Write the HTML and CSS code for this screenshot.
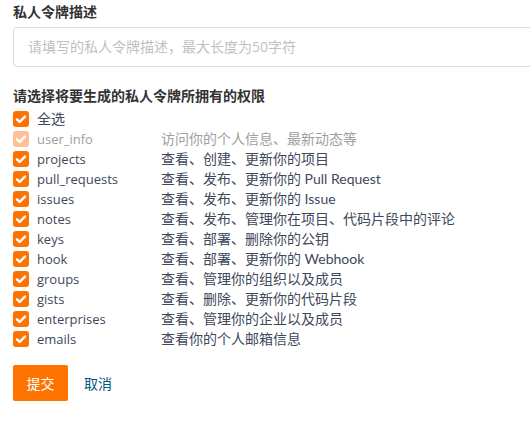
FILE: index.html
```html
<!DOCTYPE html>
<html lang="zh-CN">
<head>
<meta charset="utf-8">
<link rel="stylesheet" href="styles.css">
</head>
<body>
<div class="page">
  <div class="field-title">私人令牌描述</div>
  <div class="input">请填写的私人令牌描述，最大长度为50字符</div>
  <div class="field-title second">请选择将要生成的私人令牌所拥有的权限</div>
  <ul class="perms">
    <li class="row"><span class="cb"><svg viewBox="0 0 16 16"><path d="M4 8.3l2.7 2.6L12 5.6" fill="none" stroke="#fff" stroke-width="2.4" stroke-linecap="round" stroke-linejoin="round"/></svg></span><span class="name cjk">全选</span></li>
    <li class="row disabled"><span class="cb"><svg viewBox="0 0 16 16"><path d="M4 8.3l2.7 2.6L12 5.6" fill="none" stroke="#fff" stroke-width="2.4" stroke-linecap="round" stroke-linejoin="round"/></svg></span><span class="name">user_info</span><span class="desc">访问你的个人信息、最新动态等</span></li>
    <li class="row"><span class="cb"><svg viewBox="0 0 16 16"><path d="M4 8.3l2.7 2.6L12 5.6" fill="none" stroke="#fff" stroke-width="2.4" stroke-linecap="round" stroke-linejoin="round"/></svg></span><span class="name">projects</span><span class="desc">查看、创建、更新你的项目</span></li>
    <li class="row"><span class="cb"><svg viewBox="0 0 16 16"><path d="M4 8.3l2.7 2.6L12 5.6" fill="none" stroke="#fff" stroke-width="2.4" stroke-linecap="round" stroke-linejoin="round"/></svg></span><span class="name">pull_requests</span><span class="desc">查看、发布、更新你的 Pull Request</span></li>
    <li class="row"><span class="cb"><svg viewBox="0 0 16 16"><path d="M4 8.3l2.7 2.6L12 5.6" fill="none" stroke="#fff" stroke-width="2.4" stroke-linecap="round" stroke-linejoin="round"/></svg></span><span class="name">issues</span><span class="desc">查看、发布、更新你的 Issue</span></li>
    <li class="row"><span class="cb"><svg viewBox="0 0 16 16"><path d="M4 8.3l2.7 2.6L12 5.6" fill="none" stroke="#fff" stroke-width="2.4" stroke-linecap="round" stroke-linejoin="round"/></svg></span><span class="name">notes</span><span class="desc">查看、发布、管理你在项目、代码片段中的评论</span></li>
    <li class="row"><span class="cb"><svg viewBox="0 0 16 16"><path d="M4 8.3l2.7 2.6L12 5.6" fill="none" stroke="#fff" stroke-width="2.4" stroke-linecap="round" stroke-linejoin="round"/></svg></span><span class="name">keys</span><span class="desc">查看、部署、删除你的公钥</span></li>
    <li class="row"><span class="cb"><svg viewBox="0 0 16 16"><path d="M4 8.3l2.7 2.6L12 5.6" fill="none" stroke="#fff" stroke-width="2.4" stroke-linecap="round" stroke-linejoin="round"/></svg></span><span class="name">hook</span><span class="desc">查看、部署、更新你的 Webhook</span></li>
    <li class="row"><span class="cb"><svg viewBox="0 0 16 16"><path d="M4 8.3l2.7 2.6L12 5.6" fill="none" stroke="#fff" stroke-width="2.4" stroke-linecap="round" stroke-linejoin="round"/></svg></span><span class="name">groups</span><span class="desc">查看、管理你的组织以及成员</span></li>
    <li class="row"><span class="cb"><svg viewBox="0 0 16 16"><path d="M4 8.3l2.7 2.6L12 5.6" fill="none" stroke="#fff" stroke-width="2.4" stroke-linecap="round" stroke-linejoin="round"/></svg></span><span class="name">gists</span><span class="desc">查看、删除、更新你的代码片段</span></li>
    <li class="row"><span class="cb"><svg viewBox="0 0 16 16"><path d="M4 8.3l2.7 2.6L12 5.6" fill="none" stroke="#fff" stroke-width="2.4" stroke-linecap="round" stroke-linejoin="round"/></svg></span><span class="name">enterprises</span><span class="desc">查看、管理你的企业以及成员</span></li>
    <li class="row"><span class="cb"><svg viewBox="0 0 16 16"><path d="M4 8.3l2.7 2.6L12 5.6" fill="none" stroke="#fff" stroke-width="2.4" stroke-linecap="round" stroke-linejoin="round"/></svg></span><span class="name">emails</span><span class="desc">查看你的个人邮箱信息</span></li>
  </ul>
  <div class="actions">
    <button class="btn-submit">提交</button>
    <a class="cancel">取消</a>
  </div>
</div>
</body>
</html>
```
FILE: styles.css
```css
html, body {
  margin: 0;
  padding: 0;
  background: #fff;
}
.page {
  padding: 3px 0 0 13px;
  font-family: "Open Sans", "Noto Sans CJK SC", sans-serif;
  font-size: 14px;
  color: #40485b;
}
.field-title {
  font-weight: bold;
  line-height: 18px;
  height: 18px;
  color: #333;
}
.field-title.second {
  margin-top: 20px;
}
.input {
  margin-top: 6px;
  height: 38px;
  border: 1px solid #dedede;
  border-right: none;
  border-radius: 4px 0 0 4px;
  padding-left: 14px;
  line-height: 38px;
  color: #bfbfbf;
}
.perms {
  list-style: none;
  margin: 4px 0 0 0;
  padding: 0;
}
.row {
  display: flex;
  align-items: center;
  height: 20px;
  line-height: 20px;
}
.cb {
  width: 16px;
  height: 16px;
  border-radius: 3px;
  background: #fe7300;
  display: flex;
  flex-shrink: 0;
}
.cb svg {
  width: 16px;
  height: 16px;
}
.name {
  width: 124px;
  margin-left: 8px;
  flex-shrink: 0;
  font-size: 13px;
}
.name.cjk {
  font-size: 14px;
}
.desc {
  white-space: nowrap;
  font-family: "Lato", "Noto Sans CJK SC", sans-serif;
}
.row.disabled .cb {
  background: #fec099;
}
.row.disabled {
  color: #a0a0a0;
}
.actions {
  display: flex;
  align-items: center;
  margin-top: 16px;
}
.btn-submit {
  width: 55px;
  height: 36px;
  border: none;
  border-radius: 2px;
  background: #fe7300;
  color: #fff;
  font-family: "Open Sans", "Noto Sans CJK SC", sans-serif;
  font-size: 14px;
  padding: 0;
}
.cancel {
  margin-left: 16px;
  color: #005980;
  font-size: 14px;
}
```
